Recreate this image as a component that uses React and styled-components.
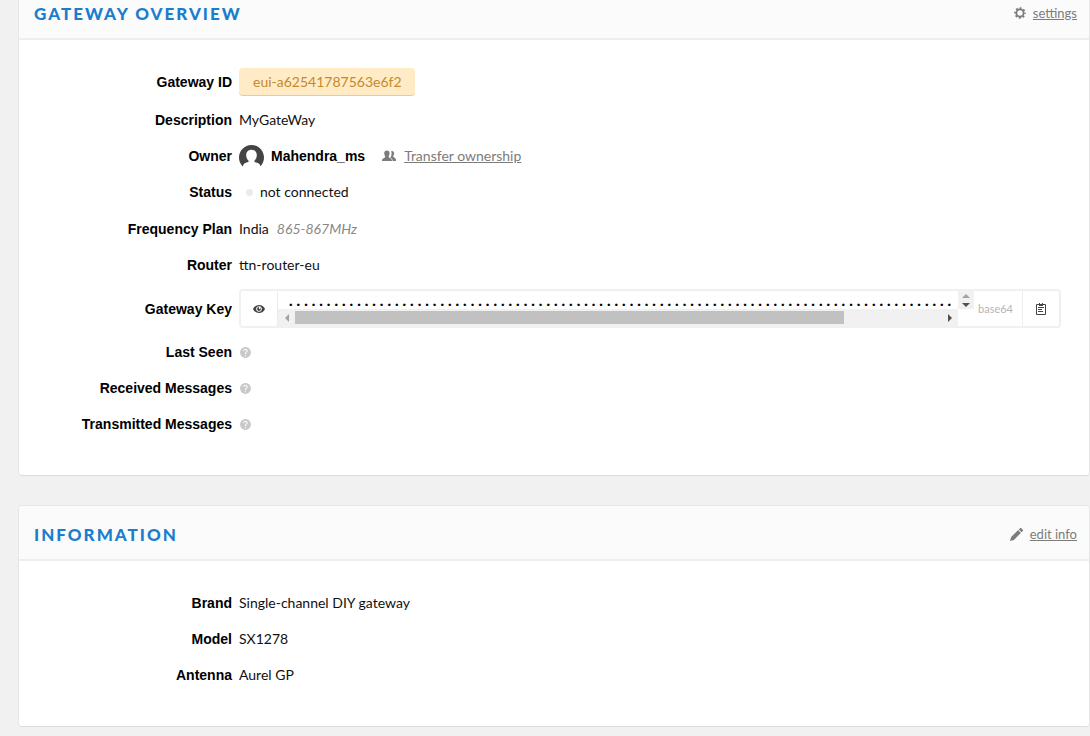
import styled, { createGlobalStyle } from "styled-components";
import { MdHelp } from "react-icons/md";

const GlobalStyle = createGlobalStyle`
  body {
    margin: 0;
    background: #f1f1f1;
    color: #111;
    font-family: Lato, "Liberation Sans", sans-serif;
    font-size: 14px;
    line-height: 20px;
    overflow-x: hidden;
  }

  * {
    box-sizing: border-box;
  }
`;

const Page = styled.main`
  display: flex;
  flex-direction: column;
  gap: 29px;
  margin-top: -16px;
  padding-left: 18px;
  padding-bottom: 9px;
`;

const Card = styled.section`
  background: #fff;
  border: 1px solid #e6e6e6;
  border-bottom-color: #dcdcdc;
  border-radius: 4px;
`;

const CardHeader = styled.header`
  display: flex;
  align-items: flex-start;
  justify-content: space-between;
  height: 55px;
  padding: 19px 12px 0 15px;
  background: #fbfbfb;
  border-bottom: 2px solid #eee;
  border-radius: 4px 4px 0 0;
`;

const CardTitle = styled.h2`
  margin: 0;
  color: #1a7dce;
  font-size: 17px;
  font-weight: 900;
  letter-spacing: 2px;
  text-transform: uppercase;
`;

const ActionLink = styled.a`
  display: inline-flex;
  align-items: center;
  gap: ${(props) => props.$gap || 7}px;
  color: #7c7c7c;
  font-size: ${(props) => props.$size || 13}px;
  line-height: 18px;
  text-decoration: none;

  & > span {
    text-decoration: underline;
  }
`;

const Fields = styled.dl`
  margin: 0;
  padding: 24px 28px 33px 0;
`;

const Row = styled.div`
  display: grid;
  grid-template-columns: 213px minmax(0, 1fr);
  column-gap: 7px;
  align-items: center;
  height: ${(props) => props.$height || 36}px;
  margin-bottom: ${(props) => props.$space || 0}px;

  & > dt {
    color: #000;
    font: bold 14px/20px "Liberation Sans", sans-serif;
    text-align: right;
  }

  & > dd {
    display: flex;
    align-items: center;
    margin: 0;
  }
`;

const IdChip = styled.span`
  height: 28px;
  padding: 4px 13px 4px 14px;
  background: #ffebc6;
  border-bottom: 1px solid #f0cd7c;
  border-radius: 4px;
  color: #c6892a;
`;

const UserName = styled.span`
  margin: 0 17px 0 7px;
  color: #000;
  font: bold 14px/20px "Liberation Sans", sans-serif;
`;

const StatusDot = styled.span`
  width: 7px;
  height: 7px;
  margin: 0 7px 0 7px;
  background: #ebebeb;
  border-radius: 50%;
`;

const Band = styled.em`
  margin-left: 8px;
  color: #888;
`;

const HelpButton = styled.button`
  display: flex;
  padding: 0;
  background: none;
  border: 0;
  color: #c9c9c9;
`;

const KeyBox = styled.div`
  display: flex;
  width: 100%;
  height: 39px;
  border: 2px solid #f0f0f0;
  border-radius: 4px;
  overflow: hidden;
`;

const KeyButton = styled.button`
  display: flex;
  flex: none;
  align-items: center;
  justify-content: center;
  width: 37px;
  padding: 0;
  background: #fff;
  border: 0 solid #ededed;
  border-${(props) => props.$divider}-width: 1px;
  color: #444;
`;

const KeyScroll = styled.div`
  display: flex;
  flex: 1;
  flex-direction: column;
  min-width: 0;
`;

const KeyText = styled.code`
  flex: 1;
  padding: 0 0 0 11px;
  color: #000;
  font: 900 15px/18px Lato, sans-serif;
  letter-spacing: 4px;
  white-space: nowrap;
  overflow: hidden;
`;

const ScrollTrack = styled.div`
  display: flex;
  align-items: center;
  justify-content: space-between;
  height: 17px;
  background: #f1f1f1;
`;

const ScrollRail = styled.div`
  flex: 1;
  height: 13px;
`;

const ScrollThumb = styled.div`
  width: 85%;
  height: 100%;
  background: #c1c1c1;
`;

const ScrollButton = styled.button`
  display: flex;
  align-items: center;
  justify-content: center;
  width: ${(props) => props.$width || 17}px;
  height: ${(props) => props.$height || 17}px;
  padding: 0;
  background: #f1f1f1;
  border: 0;
  color: ${(props) => (props.$dim ? "#a3a3a3" : "#505050")};
`;

const Stepper = styled.div`
  display: flex;
  flex: none;
  flex-direction: column;
  width: 16px;
`;

const Encoding = styled.span`
  flex: none;
  align-self: center;
  width: 48px;
  padding-left: 4px;
  color: #b5b5b5;
  font-size: 11px;
`;

const GearIcon = () => (
  <svg width="12" height="12" viewBox="0 0 12 12" fill="none" stroke="currentColor">
    <circle cx="6" cy="6" r="3.6" strokeWidth="1.8" />
    <circle cx="6" cy="6" r="4.9" strokeWidth="1.8" strokeDasharray="1.9 1.948" strokeDashoffset="0.95" />
  </svg>
);

const PencilIcon = () => (
  <svg width="13" height="13" viewBox="0 0 13 13" fill="currentColor">
    <path d="M0 13l1.100-3.900 7-7 2.800 2.800-7 7z" />
    <path d="M8.800 1.400l1-1c.5-.5 1.200-.5 1.700 0l1.100 1.100c.5.5.5 1.200 0 1.700l-1 1z" />
  </svg>
);

const PeopleIcon = () => (
  <svg width="14" height="12" viewBox="0 0 14 12" fill="currentColor">
    <path d="M9.2 1.2c1.700-.6 3 .4 2.900 2.200 0 1-.4 1.700-.8 2.300v1c.2.800 2.500 1 2.700 2.800v1.500h-3.400c0-1.900-.7-2.700-2.400-3.300.8-.8 1.200-2 1.300-3.400.1-1.200.1-2.200-.3-3.100z" />
    <path d="M2.200 3.300C2.200 1.500 3.300.5 4.900.5s2.700 1 2.700 2.800c0 1.100-.4 2-.9 2.600v1c.3 1 3 1.100 3.200 3.100v1H0V10c.2-2 2.800-2.100 3.100-3.100v-1c-.5-.6-.9-1.500-.9-2.600z" />
  </svg>
);

const AvatarIcon = () => (
  <svg width="25" height="22" viewBox="0 0 25 22">
    <path
      fill="#444"
      d="M3.500 21.200A12.300 12.300 0 0 1 0 12.500C0 5.600 5.600 0 12.500 0S25 5.600 25 12.500c0 3.400-1.300 6.500-3.500 8.700-.4-2.300-2.100-3.300-6-4.200v-1.500c1.500-1.300 2.300-3.200 2.300-5.300 0-3.400-2.100-5.500-5.300-5.500s-5.300 2.100-5.300 5.500c0 2.100.8 4 2.300 5.300V17c-3.900.9-5.100 1.900-5.500 4.200z"
    />
  </svg>
);

const EyeIcon = () => (
  <svg width="12" height="8" viewBox="0 0 12 8">
    <path fill="currentColor" d="M6 0C3.300 0 1.100 1.600 0 4c1.100 2.400 3.300 4 6 4s4.900-1.600 6-4C10.900 1.600 8.700 0 6 0z" />
    <circle cx="6" cy="4" r="2.800" fill="#fff" />
    <circle cx="6" cy="4" r="1.900" fill="currentColor" />
    <path fill="#fff" d="M6 2h1.300v2H6z" />
  </svg>
);

const ClipboardIcon = () => (
  <svg width="10" height="12" viewBox="0 0 10 12" fill="none" stroke="currentColor">
    <path d="M.5 1.500h9v10h-9z" />
    <path d="M3 0h1v1h2V0h1v3H3z" fill="currentColor" stroke="none" />
    <path d="M2 4.500h6M2 6.500h4M2 8.500h5" />
  </svg>
);

const arrows = {
  left: "M6 0v8L2 4z",
  right: "M2 0v8l4-4z",
  up: "M0 6h8L4 2z",
  down: "M0 2h8L4 6z",
};

const Arrow = ({ to }) => (
  <svg width="8" height="8" viewBox="0 0 8 8" fill="currentColor">
    <path d={arrows[to]} />
  </svg>
);

const Field = ({ label, children, ...rest }) => (
  <Row {...rest}>
    <dt>{label}</dt>
    <dd>{children}</dd>
  </Row>
);

const Help = ({ label }) => (
  <HelpButton type="button" aria-label={`About ${label}`}>
    <MdHelp size={13} />
  </HelpButton>
);

const GatewayKey = () => (
  <KeyBox>
    <KeyButton type="button" $divider="right" aria-label="Show key">
      <EyeIcon />
    </KeyButton>
    <KeyScroll>
      <KeyText>{".".repeat(88)}</KeyText>
      <ScrollTrack>
        <ScrollButton type="button" $dim aria-label="Scroll left">
          <Arrow to="left" />
        </ScrollButton>
        <ScrollRail>
          <ScrollThumb />
        </ScrollRail>
        <ScrollButton type="button" aria-label="Scroll right">
          <Arrow to="right" />
        </ScrollButton>
      </ScrollTrack>
    </KeyScroll>
    <Stepper>
      <ScrollButton type="button" $dim $width={16} $height={9} aria-label="Scroll up">
        <Arrow to="up" />
      </ScrollButton>
      <ScrollButton type="button" $width={16} $height={9} aria-label="Scroll down">
        <Arrow to="down" />
      </ScrollButton>
    </Stepper>
    <Encoding>base64</Encoding>
    <KeyButton type="button" $divider="left" aria-label="Copy key">
      <ClipboardIcon />
    </KeyButton>
  </KeyBox>
);

const messageFields = ["Last Seen", "Received Messages", "Transmitted Messages"];

const information = [
  { label: "Brand", value: "Single-channel DIY gateway" },
  { label: "Model", value: "SX1278" },
  { label: "Antenna", value: "Aurel GP" },
];

const App = () => (
  <>
    <GlobalStyle />
    <Page>
      <Card>
        <CardHeader>
          <CardTitle>Gateway Overview</CardTitle>
          <ActionLink href="#settings">
            <GearIcon />
            <span>settings</span>
          </ActionLink>
        </CardHeader>
        <Fields>
          <Field label="Gateway ID" $space={2}>
            <IdChip>eui-a62541787563e6f2</IdChip>
          </Field>
          <Field label="Description">MyGateWay</Field>
          <Field label="Owner">
            <AvatarIcon />
            <UserName>Mahendra_ms</UserName>
            <ActionLink href="#transfer" $size={14} $gap={8}>
              <PeopleIcon />
              <span>Transfer ownership</span>
            </ActionLink>
          </Field>
          <Field label="Status" $space={1}>
            <StatusDot />
            not connected
          </Field>
          <Field label="Frequency Plan">
            India
            <Band>865-867MHz</Band>
          </Field>
          <Field label="Router">ttn-router-eu</Field>
          <Field label="Gateway Key" $height={51}>
            <GatewayKey />
          </Field>
          {messageFields.map((label) => (
            <Field key={label} label={label}>
              <Help label={label} />
            </Field>
          ))}
        </Fields>
      </Card>
      <Card>
        <CardHeader>
          <CardTitle>Information</CardTitle>
          <ActionLink href="#edit">
            <PencilIcon />
            <span>edit info</span>
          </ActionLink>
        </CardHeader>
        <Fields>
          {information.map(({ label, value }) => (
            <Field key={label} label={label}>
              {value}
            </Field>
          ))}
        </Fields>
      </Card>
    </Page>
  </>
);

export default App;
